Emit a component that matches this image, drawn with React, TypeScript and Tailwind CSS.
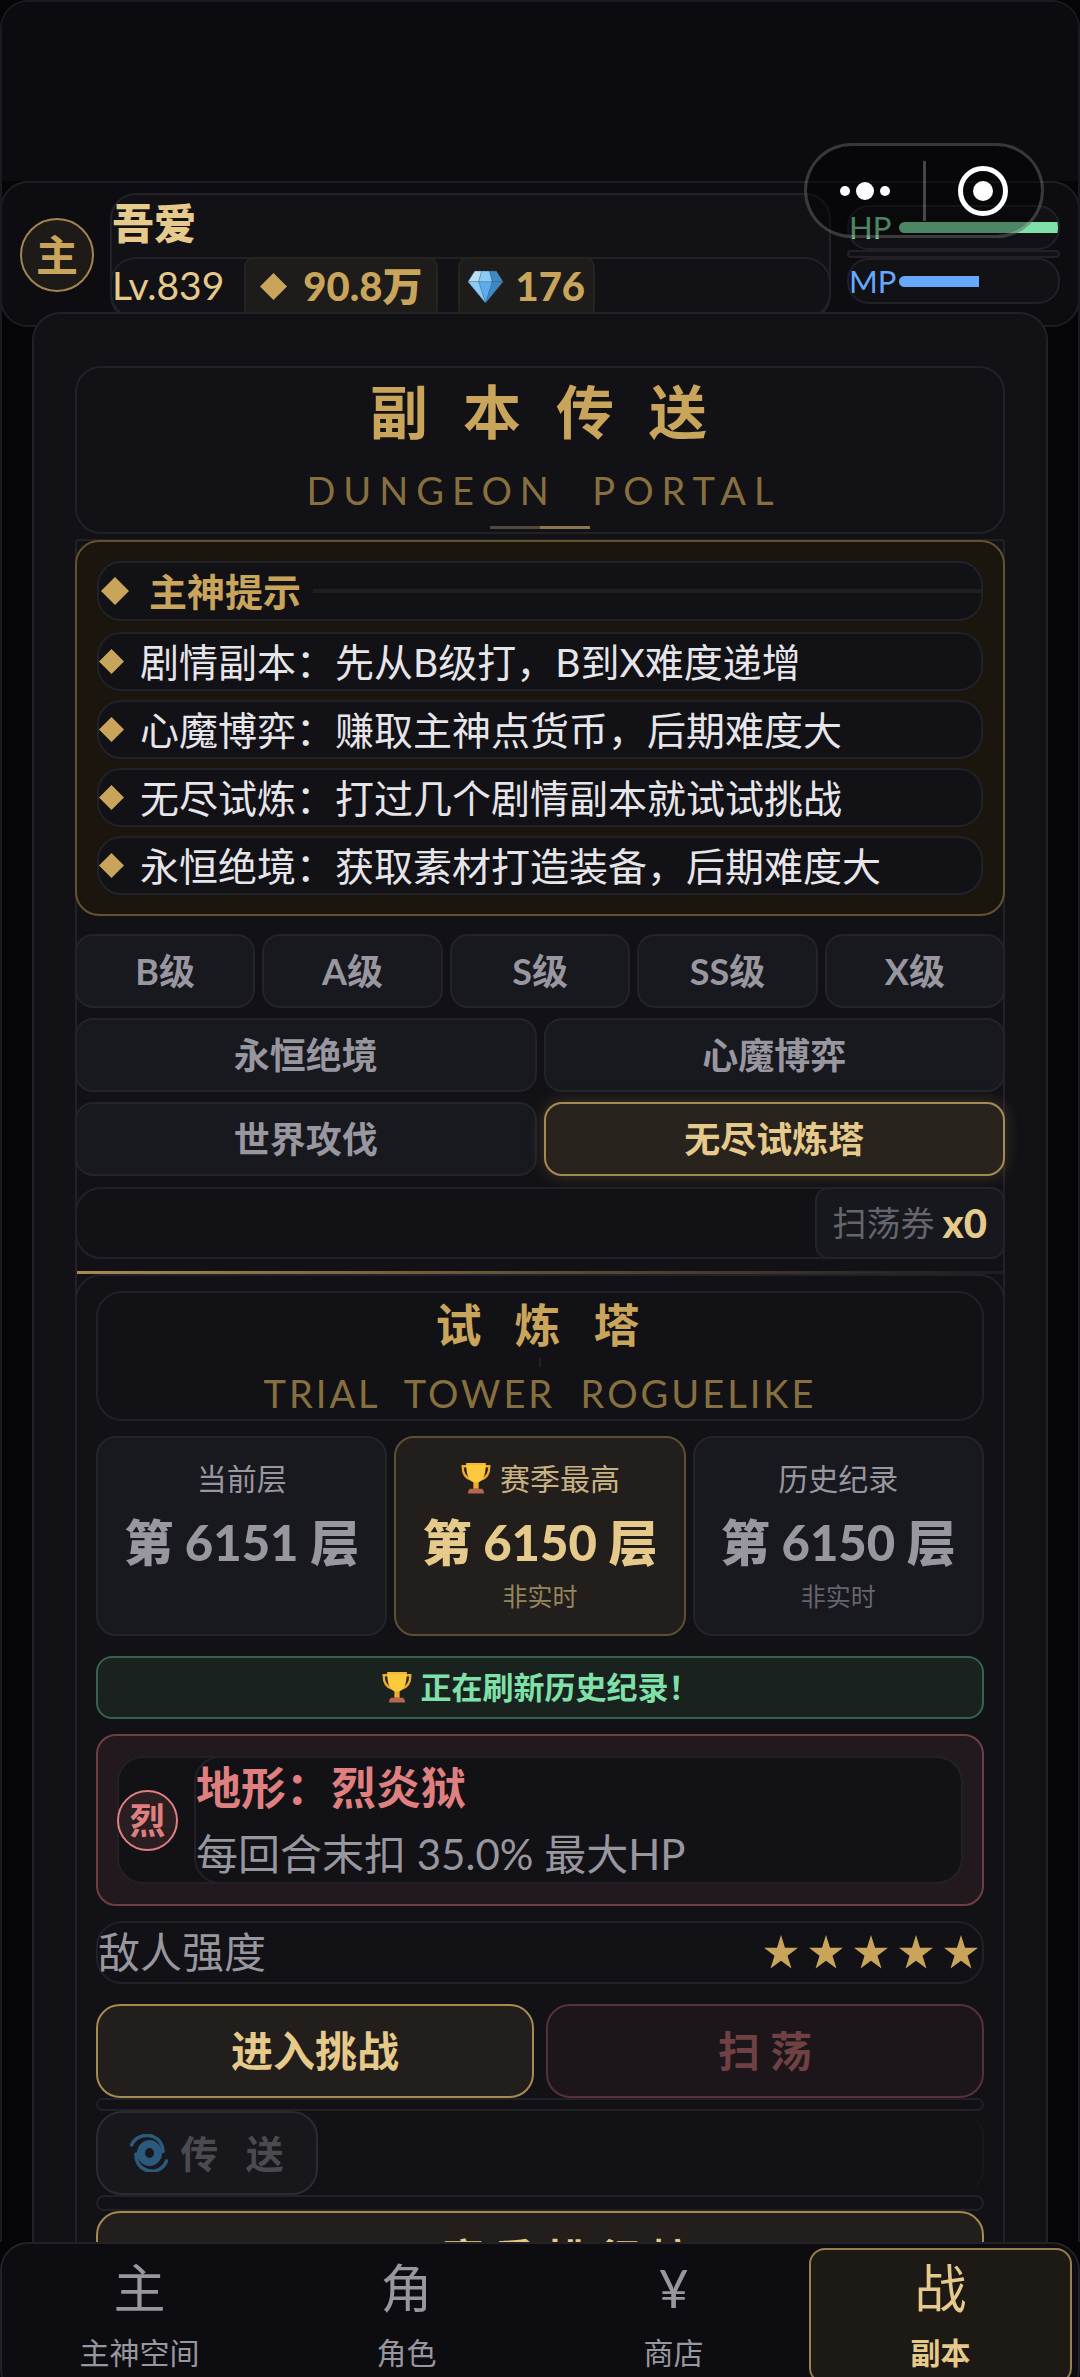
import React from "react";

const boxLine = "border-2 border-[#222128]";

function Trophy({ className }: { className: string }) {
  return (
    <svg viewBox="2 2 28 30" className={className} aria-hidden="true">
      <path d="M8 6H3.500c0 7 2 11 8 12.500M24 6h4.500c0 7-2 11-8 12.500" fill="none" stroke="#f2a92f" strokeWidth="2.200" />
      <path d="M7 3h18c.5 9-1.500 16-6.500 18l-.5 5h-4l-.5-5C8.500 19 6.500 12 7 3z" fill="#fcc93c" />
      <path d="M14.200 21h3.600l.8 6h-5.200z" fill="#f2a92f" />
      <path d="M7 3h18v1.800H7z" fill="#f7b733" />
      <path d="M10.500 27h11c1.500 1 2 2.500 2 4.500h-15c0-2 .5-3.500 2-4.500z" fill="#b8674f" />
    </svg>
  );
}

function Gem({ className }: { className: string }) {
  return (
    <svg viewBox="0 0 36 36" className={className} aria-hidden="true">
      <path d="M7 2h22l7 11-18 22L0 13z" fill="#5dadec" />
      <path d="M7 2h7l-3 11H0z" fill="#bdddf4" />
      <path d="M14 2h8l3 11H11z" fill="#8ccaf7" />
      <path d="M22 2h7l7 11H25z" fill="#4289c1" />
      <path d="M0 13h11l7 22z" fill="#8ccaf7" />
      <path d="M25 13h11L18 35z" fill="#3b88c3" />
      <path d="M7 2h22l7 11-18 22L0 13zM0 13h36M14 2l-3 11 7 22 7-22-3-11" fill="none" stroke="#25435f" strokeWidth=".4" />
    </svg>
  );
}

function Diamond({ className }: { className: string }) {
  return (
    <svg viewBox="0 0 20 20" className={className} aria-hidden="true">
      <path d="M10 0l10 10-10 10L0 10z" fill="#c9a55c" />
    </svg>
  );
}

function Star() {
  return (
    <svg viewBox="0 0 34 34" className="size-[34px]" aria-hidden="true">
      <path d="M17 0l4 12.800h13l-10.500 8 4 12.800L17 25.800 6.500 33.600l4-12.800L0 12.800h13z" fill="#c9a55c" />
    </svg>
  );
}

function Spiral() {
  return (
    <svg viewBox="0 0 38 38" className="size-[38px]" aria-hidden="true" fill="none" stroke="#2c5a7c" strokeLinecap="round">
      <ellipse cx="19.500" cy="19" rx="8.500" ry="9" strokeWidth="8" />
      <path d="M1.500 11C5 3 15-.5 23 2.500c6 2.500 10 8 10 15" strokeWidth="3.500" />
      <path d="M36.500 27C33 36 24 39 16 36 9 33.500 5.500 27 6 20" strokeWidth="3.500" />
    </svg>
  );
}

function TipRow({ text }: { text: string }) {
  return (
    <li className={"flex h-[59px] items-center gap-4 rounded-[24px] bg-[#121116] " + boxLine}>
      <Diamond className="size-[25px] shrink-0" />
      <span className="text-[39px] leading-[56px] whitespace-nowrap text-[#e6e5ea]">{text}</span>
    </li>
  );
}

function Tab({ label, active }: { label: string; active?: boolean }) {
  return (
    <button
      className={
        "h-[74px] flex-1 rounded-[18px] border-2 text-[36px] leading-[56px] font-bold " +
        (active
          ? "border-[#a58a52] bg-[#29231d] text-[#e6ca8c] shadow-[0_0_16px_rgba(201,165,92,0.25)]"
          : "border-[#24232b] bg-[#18181f] text-[#98969f]")
      }
    >
      {label}
    </button>
  );
}

function Stat({ label, value, note, best }: { label: string; value: string; note?: string; best?: boolean }) {
  return (
    <div
      className={
        "flex h-[200px] flex-1 flex-col items-center rounded-[20px] border-2 pt-[18px] " +
        (best ? "border-[#5d4e33] bg-[#221e1b]" : "border-[#24242c] bg-[#18181f]")
      }
    >
      <div className={"flex items-center gap-2 text-[30px] leading-[44px] " + (best ? "text-[#c9b183]" : "text-[#98969f]")}>
        {best && <Trophy className="size-[32px]" />}
        {label}
      </div>
      <div className={"mt-[10px] text-[49px] leading-[64px] font-black whitespace-nowrap " + (best ? "text-[#e6ca8c]" : "text-[#98969f]")}>
        {value}
      </div>
      {note && <div className={"mt-1 text-[25px] leading-[36px] " + (best ? "text-[#95855f]" : "text-[#66656d]")}>{note}</div>}
    </div>
  );
}

function NavItem({ icon, label, active }: { icon: string; label: string; active?: boolean }) {
  return (
    <button
      className={
        "flex h-[136px] flex-1 flex-col items-center rounded-[16px] border-2 pt-1 " +
        (active ? "border-[#97804d] bg-[#1d1915] text-[#e6ca8c]" : "border-transparent text-[#98969f]")
      }
    >
      <span className="text-[52px] leading-[68px]">{icon}</span>
      <span className={"mt-2 text-[30px] leading-[44px] " + (active ? "font-bold" : "")}>{label}</span>
    </button>
  );
}

export default function App() {
  const tips = [
    "剧情副本：先从B级打，B到X难度递增",
    "心魔博弈：赚取主神点货币，后期难度大",
    "无尽试炼：打过几个剧情副本就试试挑战",
    "永恒绝境：获取素材打造装备，后期难度大",
  ];
  return (
    <div className="relative flex h-screen flex-col overflow-hidden bg-[#050507] font-[Lato,'Noto_Sans_CJK_SC',sans-serif]">
      <div className="flex min-h-0 flex-1 flex-col overflow-hidden rounded-t-[28px] border-2 border-b-0 border-[#1b1a20]">
        <div className="h-[179px] shrink-0 bg-[#0c0b10]" />
        <header className="-mx-[2px] flex h-[146px] shrink-0 items-start rounded-[28px] border-2 border-[#1e1d23] bg-[#0d0c11] px-[18px]">
          <div className="mt-[35px] flex size-[74px] shrink-0 items-center justify-center rounded-full border-2 border-[#a08550] bg-[#1d1a17] text-[42px] leading-none font-bold text-[#c9a55c]">
            主
          </div>
          <div className={"mt-[10px] ml-4 min-w-0 flex-1 rounded-[26px] bg-[#121116] " + boxLine}>
            <h2 className="h-[62px] text-[42px] leading-[56px] font-black text-[#e6ca8c]">吾爱</h2>
            <div className={"-mx-[2px] flex h-[62px] gap-5 rounded-[26px] pr-3 " + boxLine}>
              <span className="-mt-[2px] text-[39px] leading-[56px] text-[#e6ca8c]">Lv.839</span>
              <span className="-mt-[2px] flex h-[62px] items-center gap-4 rounded-[10px] border-2 border-[#25241f] bg-[#1e1c1a] px-[14px] pb-1 text-[40px] leading-[56px] font-black text-[#c9a55c]">
                <Diamond className="size-[27px]" />
                90.8万
              </span>
              <span className="-mt-[2px] flex h-[62px] items-center gap-3 rounded-[10px] border-2 border-[#25241f] bg-[#1e1c1a] px-2 pb-1 text-[40px] leading-[56px] font-black text-[#c9a55c]">
                <Gem className="size-[35px]" />
                176
              </span>
            </div>
          </div>
          <div className="mt-[22px] ml-4 w-[213px] shrink-0 text-[31px] leading-none">
            <div className={"flex h-[45px] items-center overflow-hidden rounded-[22px] bg-[#121116] text-[#7fe0a8] " + boxLine}>
              <span className="w-[50px]">HP</span>
              <div className="h-[11px] flex-1 rounded-l-full bg-[#7fe0a8]" />
            </div>
            <div className={"h-[8px] rounded-[4px] bg-[#121116] " + boxLine} />
            <div className={"flex h-[46px] items-center overflow-hidden rounded-[22px] bg-[#121116] text-[#66a8fc] " + boxLine}>
              <span className="w-[50px]">MP</span>
              <div className="flex-1">
                <div className="h-[11px] w-1/2 rounded-l-full bg-[#66a8fc]" />
              </div>
            </div>
          </div>
        </header>

        <main className="relative z-10 mx-[30px] -mt-[15px] min-h-0 flex-1 overflow-hidden rounded-t-[28px] border-2 border-b-0 border-[#222128] bg-[#121116] px-[41px] pt-[52px]">
          <section className={"flex h-[168px] flex-col items-center rounded-[26px] " + boxLine}>
            <h1 className="pt-[10px] pl-8 text-[58px] leading-[68px] font-bold tracking-[35px] text-[#c9a55c]">副本传送</h1>
            <p className="mt-5 pl-2 text-[38px] leading-[48px] tracking-[8px] text-[#87703f]">DUNGEON&nbsp; PORTAL</p>
            <div className="mt-3 h-[3px] w-[100px] bg-linear-to-r from-[#504a3d] from-50% to-[#8b7650] to-50%" />
          </section>

          <div className={"-mb-20 mt-[5px] rounded-t-[4px] pb-20 " + boxLine}>
            <section className="-mx-[2px] -mt-[1px] rounded-[24px] border-2 border-[#63522f] bg-[#1a160e] px-[20px] pt-[19px] pb-[19px]">
              <div className={"mb-[11px] flex h-[60px] items-center rounded-[24px] bg-[#121116] " + boxLine}>
                <Diamond className="ml-[2px] size-[28px]" />
                <h3 className="ml-5 text-[38px] leading-[56px] font-bold text-[#c9a55c]">主神提示</h3>
                <div className="ml-3 h-1 flex-1 bg-[#1e1d22]" />
              </div>
              <ul className="flex flex-col gap-[9px]">
                {tips.map((t) => (
                  <TipRow key={t} text={t} />
                ))}
              </ul>
            </section>

            <nav className="-mx-[2px] mt-[18px] flex flex-col gap-[10px]">
              <div className="flex gap-[7px]">
                {["B级", "A级", "S级", "SS级", "X级"].map((t) => (
                  <Tab key={t} label={t} />
                ))}
              </div>
              <div className="flex gap-[7px]">
                <Tab label="永恒绝境" />
                <Tab label="心魔博弈" />
              </div>
              <div className="flex gap-[7px]">
                <Tab label="世界攻伐" />
                <Tab label="无尽试炼塔" active />
              </div>
            </nav>

            <div className={"-mx-[2px] mt-[11px] flex h-[72px] justify-end rounded-[26px] " + boxLine}>
              <div className="-my-[2px] -mr-[2px] flex items-center gap-2 rounded-[14px] border-2 border-[#24232b] bg-[#17181e] px-4 text-[34px] leading-[48px] text-[#66656d]">
                扫荡券 <b className="text-[40px] font-black text-[#e6ca8c]">x0</b>
              </div>
            </div>

            <div className="mt-3 h-[3px] bg-linear-to-r from-[#a98b4e] via-[#5e4f34] to-[#1d1c22]" />

            <section className={"-mx-[2px] rounded-[26px] px-[19px] pt-[15px] " + boxLine}>
              <div className={"flex h-[130px] flex-col items-center rounded-[26px] " + boxLine}>
                <h2 className="pt-[2px] pl-7 text-[46px] leading-[60px] font-bold tracking-[33px] text-[#c9a55c]">试炼塔</h2>
                <div className="mt-[3px] h-[9px] w-[2px] shrink-0 bg-[#222128]" />
                <p className="mt-[2px] text-[38px] leading-[48px] tracking-[3px] text-[#87703f]">TRIAL&nbsp; TOWER&nbsp; ROGUELIKE</p>
              </div>

              <div className="mt-[15px] flex gap-[7px]">
                <Stat label="当前层" value="第 6151 层" />
                <Stat label="赛季最高" value="第 6150 层" note="非实时" best />
                <Stat label="历史纪录" value="第 6150 层" note="非实时" />
              </div>

              <div className="mt-5 flex h-[63px] items-center justify-center gap-2 rounded-[16px] border-2 border-[#37604d] bg-[#1a2220] pb-[2px] text-[31px] leading-[44px] font-bold text-[#7fe0a8]">
                <Trophy className="size-[32px]" />
                正在刷新历史纪录！
              </div>

              <div className="mt-[15px] rounded-[20px] border-2 border-[#6d3f44] bg-[#21191d] px-[19px] py-5">
                <div className={"flex h-[128px] items-center rounded-[26px] bg-[#121116] " + boxLine}>
                  <div className="-ml-[2px] flex size-[61px] shrink-0 items-center justify-center rounded-full border-2 border-[#df7f80] bg-[#2b1e21] text-[36px] leading-none font-bold text-[#df7f80]">
                    烈
                  </div>
                  <div className={"-my-[2px] -mr-[2px] ml-4 flex h-[128px] flex-1 flex-col rounded-[26px] " + boxLine}>
                    <h3 className="text-[45px] leading-[60px] font-bold text-[#df7f80]">地形：烈炎狱</h3>
                    <p className="mt-2 text-[42px] leading-[56px] text-[#98969f]">每回合末扣 35.0% 最大HP</p>
                  </div>
                </div>
              </div>

              <div className={"mt-[15px] flex h-[63px] items-center justify-between rounded-[26px] pb-[2px] " + boxLine}>
                <span className="text-[42px] leading-[56px] text-[#98969f]">敌人强度</span>
                <span className="mr-1 flex gap-[11px]" role="img" aria-label="5 / 5">
                  <Star />
                  <Star />
                  <Star />
                  <Star />
                  <Star />
                </span>
              </div>

              <div className="mt-5 flex gap-3">
                <button className="h-[94px] flex-1 rounded-[24px] border-2 border-[#a58a52] bg-[#221e1b] text-[42px] leading-[56px] font-bold text-[#e6ca8c]">
                  进入挑战
                </button>
                <button className="h-[94px] flex-1 rounded-[24px] border-2 border-[#56303a] bg-[#1c161b] text-[42px] leading-[56px] font-bold text-[#6f4044]">
                  扫 荡
                </button>
              </div>
              <div className={"h-[13px] rounded-[8px] " + boxLine} />
              <div className="flex rounded-[26px] border-r-2 border-[#19181d]">
                <button className="flex h-[84px] w-[222px] items-center justify-center gap-3 rounded-[26px] border-2 border-[#2c2b31] bg-[#18171c] text-[38px] leading-[56px] font-bold text-[#4b4a50]">
                  <Spiral />
                  <span className="whitespace-pre">传&nbsp;&nbsp; 送</span>
                </button>
              </div>
              <div className={"h-[16px] rounded-[8px] " + boxLine} />
              <button className="flex h-[95px] w-full items-center justify-center gap-[22px] rounded-[24px] border-2 border-[#a58a52] bg-[#221e1b] text-[42px] leading-[56px] font-bold tracking-[10px] text-[#e6ca8c]">
                <Trophy className="h-[34px] w-[42px]" />
                赛季排行榜
              </button>
            </section>
          </div>
        </main>
      </div>

      <nav className="relative z-20 -mb-[20px] flex h-[155px] shrink-0 gap-[4px] rounded-[28px] border-2 border-[#222128] bg-[#0d0c11] px-[6px] pt-1">
        <NavItem icon="主" label="主神空间" />
        <NavItem icon="角" label="角色" />
        <NavItem icon="¥" label="商店" />
        <NavItem icon="战" label="副本" active />
      </nav>

      <div className="absolute top-[143px] right-[36px] z-30 flex h-[95px] w-[240px] items-center rounded-full border-[3px] border-white/20 bg-black/40">
        <button className="flex flex-1 justify-center" aria-label="更多">
          <svg viewBox="0 0 50 20" className="h-5 w-[50px]" fill="#fff">
            <circle cx="5" cy="10" r="5" />
            <circle cx="25" cy="10" r="9" />
            <circle cx="45" cy="10" r="5" />
          </svg>
        </button>
        <div className="h-[60px] w-[3px] bg-white/25" />
        <button className="flex flex-1 justify-center" aria-label="关闭">
          <svg viewBox="0 0 50 50" className="size-[50px]">
            <circle cx="25" cy="25" r="22.500" fill="none" stroke="#fff" strokeWidth="5" />
            <circle cx="25" cy="25" r="10" fill="#fff" />
          </svg>
        </button>
      </div>
    </div>
  );
}
